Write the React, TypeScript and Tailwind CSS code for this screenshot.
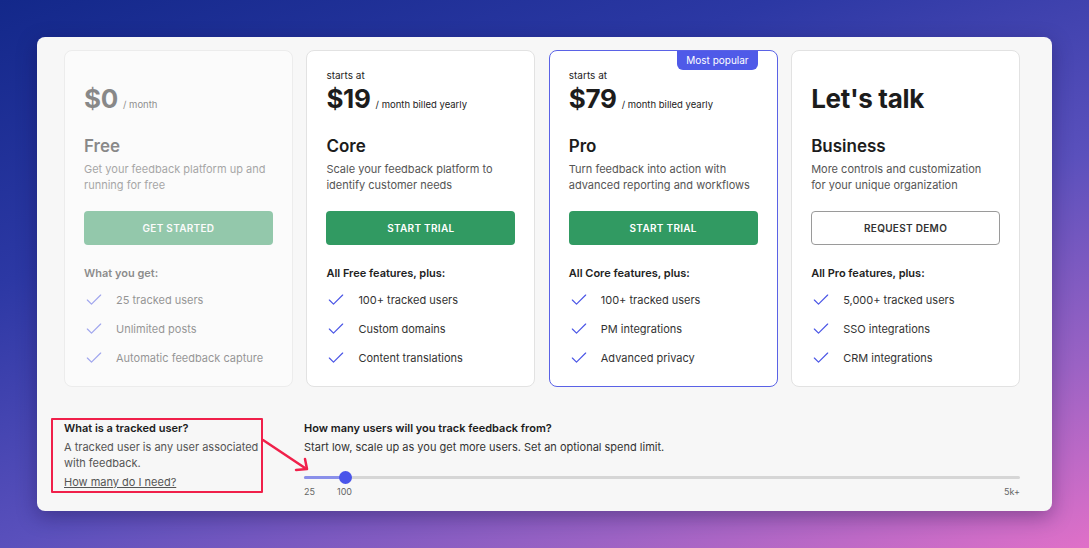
import React from 'react';
import { Check } from 'lucide-react';

interface Plan {
  name: string;
  price: string;
  priceNote?: string;
  startsAt: boolean;
  description: string[];
  cta: string;
  ctaStyle: 'green' | 'outline';
  featuresTitle: string;
  features: string[];
  faded?: boolean;
  popular?: boolean;
}

const plans: Plan[] = [
  {
    name: 'Free',
    price: '$0',
    priceNote: '/ month',
    startsAt: false,
    description: ['Get your feedback platform up and', 'running for free'],
    cta: 'Get started',
    ctaStyle: 'green',
    featuresTitle: 'What you get:',
    features: ['25 tracked users', 'Unlimited posts', 'Automatic feedback capture'],
    faded: true,
  },
  {
    name: 'Core',
    price: '$19',
    priceNote: '/ month billed yearly',
    startsAt: true,
    description: ['Scale your feedback platform to', 'identify customer needs'],
    cta: 'Start trial',
    ctaStyle: 'green',
    featuresTitle: 'All Free features, plus:',
    features: ['100+ tracked users', 'Custom domains', 'Content translations'],
  },
  {
    name: 'Pro',
    price: '$79',
    priceNote: '/ month billed yearly',
    startsAt: true,
    description: ['Turn feedback into action with', 'advanced reporting and workflows'],
    cta: 'Start trial',
    ctaStyle: 'green',
    featuresTitle: 'All Core features, plus:',
    features: ['100+ tracked users', 'PM integrations', 'Advanced privacy'],
    popular: true,
  },
  {
    name: 'Business',
    price: "Let's talk",
    startsAt: false,
    description: ['More controls and customization', 'for your unique organization'],
    cta: 'Request demo',
    ctaStyle: 'outline',
    featuresTitle: 'All Pro features, plus:',
    features: ['5,000+ tracked users', 'SSO integrations', 'CRM integrations'],
  },
];

const PlanCard = ({ plan }: { plan: Plan }) => (
  <div
    className={`relative flex flex-col bg-white rounded-lg border px-[19px] pt-[17px] pb-5 h-[337px] ${
      plan.popular ? 'border-[#5a62e6]' : 'border-[#e2e2e2]'
    } ${plan.faded ? 'opacity-50' : ''}`}
  >
    {plan.popular && (
      <div className="absolute top-0 right-[19px] bg-[#4f5ae8] text-white text-[10px] leading-[19px] px-[9px] rounded-b-md">
        Most popular
      </div>
    )}
    <div className={`text-[10px] leading-[14px] text-[#222] ${plan.startsAt ? '' : 'invisible'}`}>starts at</div>
    <div className="mt-[1px] flex items-baseline gap-[5px] h-8">
      <span className="text-[26px] leading-8 font-bold text-[#1c1c1c] tracking-[-0.3px]">{plan.price}</span>
      {plan.priceNote && <span className="text-[9.5px] text-[#222]">{plan.priceNote}</span>}
    </div>
    <div className="mt-[19px] text-[17px] leading-6 font-semibold text-[#1c1c1c]">{plan.name}</div>
    <div className="mt-[3px] text-[11px] leading-4 text-[#555]">
      {plan.description.map((line) => (
        <div key={line}>{line}</div>
      ))}
    </div>
    <button
      className={`mt-[18px] h-[34px] shrink-0 w-full rounded text-[10px] font-semibold uppercase tracking-[0.3px] ${
        plan.ctaStyle === 'green'
          ? 'bg-[#319a62] text-white'
          : 'bg-white text-[#333] border border-[#9a9a9a]'
      }`}
    >
      {plan.cta}
    </button>
    <div className="mt-[20px] text-[11px] leading-4 font-semibold text-[#222]">{plan.featuresTitle}</div>
    <div className="mt-[9px] flex flex-col gap-[9px]">
      {plan.features.map((f) => (
        <div key={f} className="flex items-center gap-3 h-5">
          <Check size={20} strokeWidth={1.4} className="text-[#4a55e6]" />
          <span className="text-[11px] text-[#333]">{f}</span>
        </div>
      ))}
    </div>
  </div>
);

export default function App() {
  return (
    <div
      className="w-[1089px] h-[548px] overflow-hidden pt-[37px] pl-[37px] bg-[linear-gradient(160deg,#13288a_0%,#2c38a4_30%,#5a50bc_58%,#9a62c4_80%,#e070c8_100%)]"
      style={{ fontFamily: 'Inter, "Noto Sans", sans-serif' }}
    >
      <div className="relative w-[1015px] h-[474px] bg-[#f7f7f7] rounded-lg shadow-[0_6px_20px_rgba(20,10,60,0.35)] pl-[27px] pr-[32px] pt-[13px]">
        <div className="grid grid-cols-4 gap-[13.5px]">
          {plans.map((p) => (
            <PlanCard key={p.name} plan={p} />
          ))}
        </div>

        <div className="mt-[33px] flex">
          <div className="w-[240px] text-[11px] leading-4">
            <div className="font-semibold text-[#1c1c1c]">What is a tracked user?</div>
            <div className="mt-[3px] text-[#555]">
              A tracked user is any user associated
              <br />
              with feedback.
            </div>
            <div className="mt-[3px] text-[#555] underline">How many do I need?</div>
          </div>
          <div className="flex-1">
            <div className="text-[11px] leading-4 font-semibold text-[#1c1c1c]">
              How many users will you track feedback from?
            </div>
            <div className="mt-[3px] text-[11px] leading-4 text-[#333]">
              Start low, scale up as you get more users. Set an optional spend limit.
            </div>
            <div className="relative mt-[16px] h-[13px] flex items-center">
              <div className="w-full h-[3px] rounded-full bg-[#d6d6d6]" />
              <div className="absolute left-0 w-[41px] h-[3px] rounded-full bg-[#8a90ea]" />
              <div className="absolute left-[35px] w-[13px] h-[13px] rounded-full bg-[#4a55ea]" />
            </div>
            <div className="relative mt-[2px] h-[12px] text-[9px] leading-3 text-[#666]">
              <span className="absolute left-0">25</span>
              <span className="absolute left-[33px]">100</span>
              <span className="absolute right-0">5k+</span>
            </div>
          </div>
        </div>

        {/* annotation overlay */}
        <div className="absolute left-[14px] top-[381px] w-[212px] h-[75px] border-2 border-[#f0204a] rounded-[1px]" />
        <svg className="absolute left-[224px] top-[400px]" width="60" height="40" viewBox="0 0 60 40">
          <line x1="2" y1="3" x2="44" y2="31" stroke="#f0204a" strokeWidth="2.5" strokeLinecap="round" />
          <polyline points="35,33 46,32 44,22" fill="none" stroke="#f0204a" strokeWidth="2.5" strokeLinecap="round" strokeLinejoin="round" />
        </svg>
      </div>
    </div>
  );
}
